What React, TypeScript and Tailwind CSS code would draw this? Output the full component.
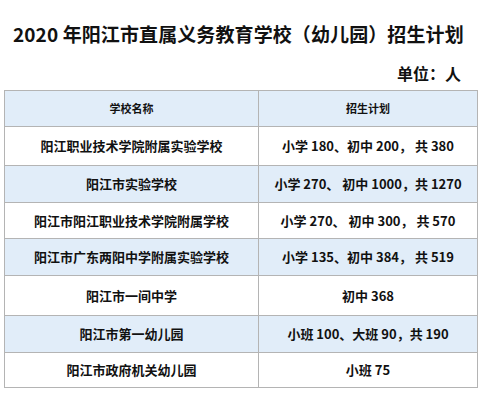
const rows: [string, string, number][] = [
  ["阳江职业技术学院附属实验学校", "小学 180、初中 200， 共 380", 39],
  ["阳江市实验学校", "小学 270、 初中 1000，共 1270", 37],
  ["阳江市阳江职业技术学院附属学校", "小学 270、 初中 300， 共 570", 36],
  ["阳江市广东两阳中学附属实验学校", "小学 135、初中 384， 共 519", 37],
  ["阳江市一间中学", "初中 368", 40],
  ["阳江市第一幼儿园", "小班 100、大班 90，共 190", 37],
  ["阳江市政府机关幼儿园", "小班 75", 35],
];

export default function App() {
  return (
    <div
      className="w-[483px] h-[400px] bg-white text-[#111] overflow-hidden"
      style={{ fontFamily: '"Noto Sans CJK SC", "Noto Sans", sans-serif' }}
    >
      <h1 className="pt-[20px] pl-[13px] text-[19px] leading-[28px] font-bold tracking-[0.1px]">
        2020 年阳江市直属义务教育学校（幼儿园）招生计划
      </h1>
      <div className="mt-[14px] pr-[22px] text-right text-[16px] leading-[22px] font-bold">
        单位：人
      </div>
      <table className="mt-[6px] ml-[4px] w-[474px] border-collapse border border-[#b4b4b4] font-bold">
        <thead>
          <tr className="h-[36px] bg-[#e1edf9] text-[11px]">
            <th className="w-[254px] border border-[#b4b4b4] font-bold">学校名称</th>
            <th className="border border-[#b4b4b4] font-bold">招生计划</th>
          </tr>
        </thead>
        <tbody>
          {rows.map(([name, plan, h], i) => (
            <tr
              key={name}
              style={{ height: h }}
              className={`text-[13px] ${i % 2 === 1 ? "bg-[#e1edf9]" : "bg-white"}`}
            >
              <td className="border border-[#b4b4b4] text-center">{name}</td>
              <td className="border border-[#b4b4b4] text-center">{plan}</td>
            </tr>
          ))}
        </tbody>
      </table>
    </div>
  );
}
